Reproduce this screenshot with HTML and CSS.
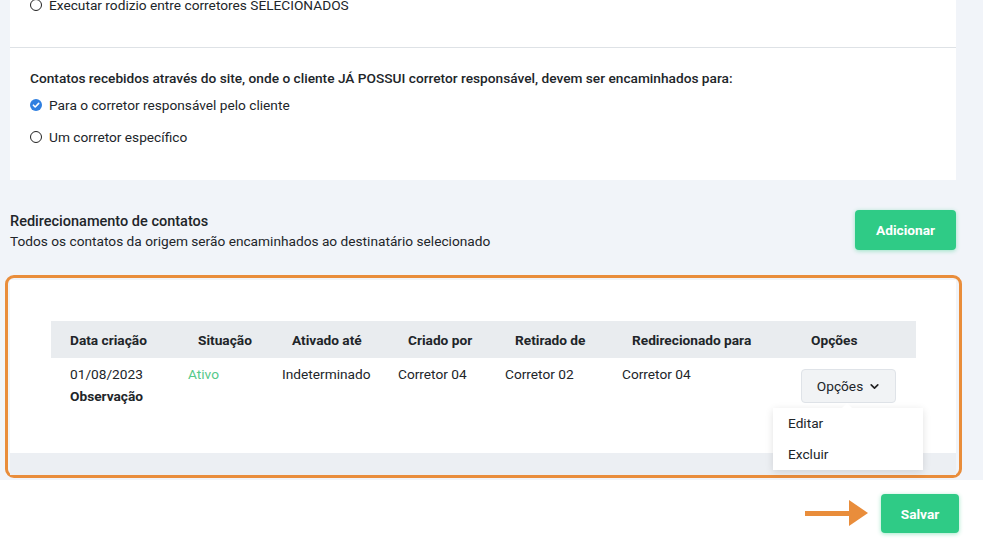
FILE: index.html
```html
<!DOCTYPE html>
<html lang="pt-BR">
<head>
<meta charset="utf-8">
<link rel="stylesheet" href="styles.css">
</head>
<body>
<div class="page">
  <section class="card-top">
    <div class="group group-first">
      <label class="opt"><span class="radio"></span>Executar rodizio entre corretores SELECIONADOS</label>
    </div>
    <div class="group group-second">
      <p class="q">Contatos recebidos através do site, onde o cliente JÁ POSSUI corretor responsável, devem ser encaminhados para:</p>
      <label class="opt"><span class="radio checked"><svg viewBox="0 0 12 12" width="12" height="12"><circle cx="6" cy="6" r="6" fill="#2f7fe0"/><path d="M3.4 6.2 L5.2 8 L8.7 4.4" fill="none" stroke="#fff" stroke-width="1.6" stroke-linecap="round" stroke-linejoin="round"/></svg></span>Para o corretor responsável pelo cliente</label>
      <label class="opt"><span class="radio"></span>Um corretor específico</label>
    </div>
  </section>

  <div class="redir-head">
    <div class="redir-text">
      <h2 class="redir-title">Redirecionamento de contatos</h2>
      <p class="redir-sub">Todos os contatos da origem serão encaminhados ao destinatário selecionado</p>
    </div>
    <button class="btn-green btn-add">Adicionar</button>
  </div>

  <div class="highlight">
    <div class="table-card">
      <div class="table">
        <div class="thead">
          <div class="th first">Data criação</div>
          <div class="th">Situação</div>
          <div class="th">Ativado até</div>
          <div class="th">Criado por</div>
          <div class="th">Retirado de</div>
          <div class="th">Redirecionado para</div>
          <div class="th">Opções</div>
        </div>
        <div class="tr">
          <div class="td">01/08/2023<br><strong>Observação</strong></div>
          <div class="td active">Ativo</div>
          <div class="td">Indeterminado</div>
          <div class="td">Corretor 04</div>
          <div class="td">Corretor 02</div>
          <div class="td">Corretor 04</div>
          <div class="td opt-cell">
            <button class="btn-opts">Opções <svg viewBox="0 0 10 10" width="11" height="11"><path d="M2 3.5 L5 6.5 L8 3.5" fill="none" stroke="#222" stroke-width="1.5" stroke-linecap="round" stroke-linejoin="round"/></svg></button>
            <div class="menu">
              <div class="menu-item">Editar</div>
              <div class="menu-item">Excluir</div>
            </div>
          </div>
        </div>
      </div>
    </div>
    <div class="card-foot"></div>
  </div>

  <div class="footer">
    <span class="arrow"><span class="arrow-line"></span><span class="arrow-head"></span></span>
    <button class="btn-green btn-save">Salvar</button>
  </div>
</div>
</body>
</html>
```
FILE: styles.css
```css
* { box-sizing: border-box; }
html, body { margin: 0; padding: 0; }
body {
  background: #f1f4f9;
  font-family: Roboto, "Liberation Sans", sans-serif;
  font-size: 13.7px;
  color: #212529;
  width: 983px;
  height: 544px;
  overflow: hidden;
}
.page { display: flex; flex-direction: column; }

.card-top {
  margin: 0 27px 0 10px;
  background: #fff;
  height: 180px;
}
.group-first {
  height: 52px;
  border-bottom: 1px solid #dee2e6;
  padding: 0 20px;
  margin-top: -4px;
}
.group-second { padding: 21px 20px 0; }
.q { margin: 0 0 9px; font-weight: 500; line-height: 18px; }
.opt {
  display: flex;
  align-items: center;
  gap: 7px;
  height: 18px;
  margin-bottom: 14px;
  line-height: 18px;
}
.radio {
  width: 12px;
  height: 12px;
  border: 1.5px solid #222;
  border-radius: 50%;
  flex: none;
  display: inline-flex;
}
.radio.checked { border: none; }

.redir-head {
  display: flex;
  justify-content: space-between;
  align-items: flex-start;
  margin: 30px 27px 0 10px;
  height: 40px;
}
.redir-text { padding-top: 3px; }
.redir-title { margin: 0 0 2px; font-size: 14.5px; font-weight: 500; line-height: 18px; }
.redir-sub { margin: 0; line-height: 17px; }

.btn-green {
  background: #2fcb86;
  color: #fff;
  border: none;
  border-radius: 4px;
  font-family: inherit;
  font-weight: 700;
  font-size: 13.7px;
  box-shadow: 0 1px 4px rgba(47,203,134,0.45);
}
.btn-add { width: 101px; height: 40px; }

.highlight {
  margin: 25px 21px 0 5px;
  border: 3px solid #e98d3b;
  border-radius: 9px;
  padding: 2px 3px 0 2px;
  height: 203px;
  display: flex;
  flex-direction: column;
}
.table-card {
  background: #fff;
  height: 173px;
  padding: 41px 40px 0 41px;
}
.card-foot { flex: 1; background: #eceff3; }

.thead, .tr {
  display: grid;
  grid-template-columns: 118px 94px 116px 107px 117px 179px 134px;
}
.thead {
  background: #e9ecef;
  height: 37px;
  align-items: center;
  font-weight: 700;
}
.th { padding-left: 29px; white-space: nowrap; }
.th.first { padding-left: 19px; }
.tr { padding-top: 5px; line-height: 22px; }
.td { padding-left: 19px; white-space: nowrap; }
.td strong { font-weight: 700; }
.td.active { color: #55c98a; }
.opt-cell { position: relative; }
.btn-opts {
  margin-top: 6px;
  width: 95px;
  height: 34px;
  background: #f1f3f5;
  border: 1px solid #dfe3e8;
  border-radius: 4px;
  font-family: inherit;
  font-size: 13.7px;
  color: #212529;
  display: flex;
  align-items: center;
  justify-content: center;
  gap: 6px;
  padding: 0;
}
.menu {
  position: absolute;
  left: -9px;
  top: 45px;
  width: 150px;
  background: #fff;
  box-shadow: 0 2px 8px rgba(0,0,0,0.12);
  padding: 0;
  z-index: 2;
}
.menu::before {
  content: "";
  position: absolute;
  top: -5px;
  left: 69px;
  border-left: 5px solid transparent;
  border-right: 5px solid transparent;
  border-bottom: 5px solid #fff;
}
.menu-item { padding: 0 15px; height: 31px; line-height: 31px; }

.footer {
  background: #fff;
  margin-top: 2px;
  height: 64px;
  display: flex;
  justify-content: flex-end;
  align-items: flex-start;
  padding: 14px 24px 0 0;
  gap: 13px;
}
.arrow { display: flex; align-items: center; margin-top: 6px; }
.arrow-line { width: 44px; height: 5px; background: #e98d3b; }
.arrow-head {
  width: 0; height: 0;
  border-top: 13px solid transparent;
  border-bottom: 13px solid transparent;
  border-left: 19px solid #e98d3b;
}
.btn-save { width: 78px; height: 39px; }
```
